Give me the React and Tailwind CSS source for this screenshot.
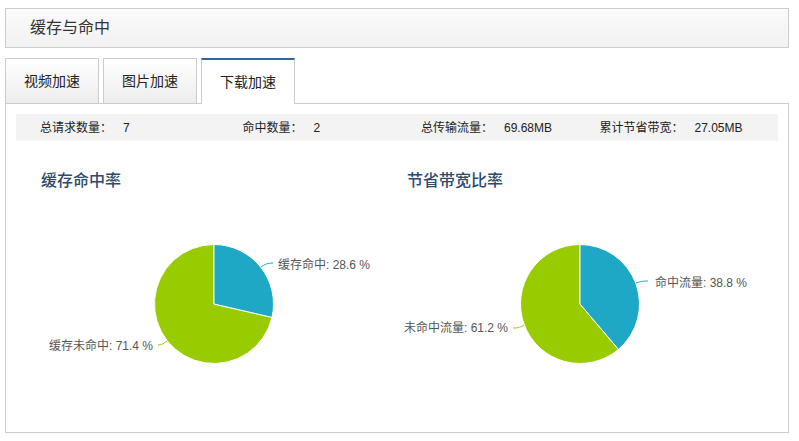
const FONT = { fontFamily: '"Liberation Sans", "Noto Sans CJK SC", sans-serif' }

const STATS = [
  ['总请求数量：', '7'],
  ['命中数量：', '2'],
  ['总传输流量：', '69.68MB'],
  ['累计节省带宽：', '27.05MB'],
]

const CHARTS = [
  {
    title: '缓存命中率',
    hit: 0.286,
    labels: [
      { text: '缓存命中: 28.6 %', x: 262, y: 78, anchor: 'start', color: '#1aadce', line: 'M245 76 C249 73 252 72 257 72' },
      { text: '缓存未命中: 71.4 %', x: 137, y: 159, anchor: 'end', color: '#99cc00', line: 'M151 150 C148 152 146 154 142 154' },
    ],
  },
  {
    title: '节省带宽比率',
    hit: 0.388,
    labels: [
      { text: '命中流量: 38.8 %', x: 273, y: 96, anchor: 'start', color: '#1aadce', line: 'M254 92 C257 91 260 90 266 90' },
      { text: '未命中流量: 61.2 %', x: 126, y: 141, anchor: 'end', color: '#99cc00', line: 'M142 134 C139 136 137 137 131 137' },
    ],
  },
]

function Pie({ hit, labels }) {
  const cx = 198, cy = 113, r = 59.5
  const a = hit * 2 * Math.PI
  const x1 = cx + r * Math.sin(a)
  const y1 = cy - r * Math.cos(a)
  const big = hit > 0.5 ? 1 : 0
  return (
    <svg width="366" height="230" className="block">
      <path d={`M${cx} ${cy} L${x1} ${y1} A${r} ${r} 0 ${1 - big} 1 ${cx} ${cy - r} Z`} fill="#99cc00" stroke="#fff" strokeWidth="1" />
      <path d={`M${cx} ${cy} L${cx} ${cy - r} A${r} ${r} 0 ${big} 1 ${x1} ${y1} Z`} fill="#1ea8c6" stroke="#fff" strokeWidth="1" />
      {labels.map(l => (
        <g key={l.text}>
          <path d={l.line} fill="none" stroke={l.color} strokeWidth="1" />
          <text x={l.x} y={l.y} textAnchor={l.anchor} fontSize="12" fill="#555" style={FONT}>{l.text}</text>
        </g>
      ))}
    </svg>
  )
}

export default function App() {
  return (
    <div className="w-[799px] h-[441px] bg-white pt-[8px] pl-[5px]" style={FONT}>
      <div className="w-[784px] h-[40px] border border-[#cccccc] bg-gradient-to-b from-[#fbfbfb] to-[#f1f1f1] flex items-center pl-[24px] text-[16px] text-[#333]">
        缓存与命中
      </div>

      {/* tabs */}
      <div className="flex items-end gap-[4px] mt-[10px] relative z-10 -mb-px">
        {['视频加速', '图片加速'].map(t => (
          <div key={t} className="w-[94px] h-[46px] border border-[#cccccc] bg-gradient-to-b from-white to-[#ededed] flex items-center justify-center text-[14px] text-[#222]">
            {t}
          </div>
        ))}
        <div className="w-[94px] h-[46px] border border-[#cccccc] border-t-2 border-t-[#31679c] border-b-0 bg-white flex items-center justify-center text-[14px] text-[#222]">
          下载加速
        </div>
      </div>

      <div className="w-[784px] h-[330px] border border-[#cccccc] px-[10px] pt-[10px]">
        <div className="h-[27px] bg-[#f3f3f3] grid grid-cols-4 items-center text-[12px] text-[#222]">
          {STATS.map(([k, v]) => (
            <div key={k} className="flex">
              <span className="w-[96px] text-right">{k}</span>
              <span className="ml-[11px]">{v}</span>
            </div>
          ))}
        </div>

        <div className="flex mt-[30px]">
          {CHARTS.map(c => (
            <div key={c.title} className="w-[366px]">
              <div className="pl-[25px] h-[20px] leading-[20px] text-[16px] font-medium text-[#2d4b6b]">{c.title}</div>
              <Pie hit={c.hit} labels={c.labels} />
            </div>
          ))}
        </div>
      </div>
    </div>
  )
}
